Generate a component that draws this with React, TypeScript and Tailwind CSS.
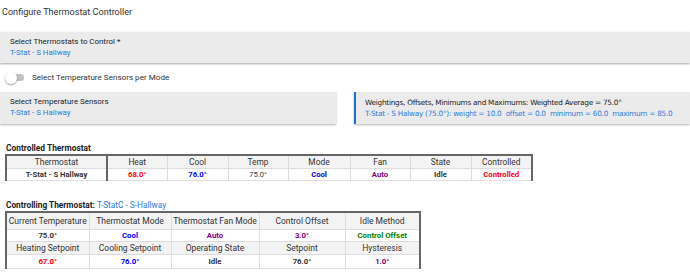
import React from "react";

const blue = "text-[#2f7bd8]";

function Table1() {
  const widths = [101, 60, 61, 60, 62, 60, 61, 61];
  const heads = ["Thermostat", "Heat", "Cool", "Temp", "Mode", "Fan", "State", "Controlled"];
  const cells: { t: string; c: string; w: string }[] = [
    { t: "T-Stat - S Hallway", c: "text-[#333]", w: "font-bold" },
    { t: "68.0°", c: "text-[#ff0000]", w: "font-bold" },
    { t: "76.0°", c: "text-[#0000ff]", w: "font-bold" },
    { t: "75.0°", c: "text-[#444]", w: "font-normal" },
    { t: "Cool", c: "text-[#0000ff]", w: "font-bold" },
    { t: "Auto", c: "text-[#800080]", w: "font-bold" },
    { t: "Idle", c: "text-[#333]", w: "font-bold" },
    { t: "Controlled", c: "text-[#ff0000]", w: "font-bold" },
  ];
  return (
    <table className="ml-[5px] border-collapse table-fixed border-t-2 border-x-2 border-[#666]">
      <colgroup>
        {widths.map((w, i) => (
          <col key={i} style={{ width: w }} />
        ))}
      </colgroup>
      <tbody>
        <tr className="h-[12px] bg-[#f3f3f3]">
          {heads.map((h, i) => (
            <td
              key={i}
              className={`p-0 text-center text-[8.4px] leading-[12px] text-[#333] border-b border-[#ddd] ${i === 0 ? "border-r-2 border-r-[#666]" : "border-r border-r-[#ddd]"}`}
            >
              {h}
            </td>
          ))}
        </tr>
        <tr className="h-[12px] bg-white">
          {cells.map((c, i) => (
            <td
              key={i}
              className={`p-0 text-center text-[7.7px] leading-[11px] ${c.c} ${c.w} border-b border-[#ddd] ${i === 0 ? "border-r-2 border-r-[#666]" : "border-r border-r-[#ddd]"}`}
            >
              {c.t}
            </td>
          ))}
        </tr>
      </tbody>
    </table>
  );
}

function Table2() {
  const widths = [83, 82, 88, 86, 75];
  const rows: { h: boolean; cells: { t: string; c?: string }[]; hh: string }[] = [
    {
      h: true,
      hh: "h-[17px]",
      cells: [
        { t: "Current Temperature" },
        { t: "Thermostat Mode" },
        { t: "Thermostat Fan Mode" },
        { t: "Control Offset" },
        { t: "Idle Method" },
      ],
    },
    {
      h: false,
      hh: "h-[12px]",
      cells: [
        { t: "75.0°", c: "text-[#333]" },
        { t: "Cool", c: "text-[#0000ff]" },
        { t: "Auto", c: "text-[#800080]" },
        { t: "3.0°", c: "text-[#800080]" },
        { t: "Control Offset", c: "text-[#008000]" },
      ],
    },
    {
      h: true,
      hh: "h-[13px]",
      cells: [
        { t: "Heating Setpoint" },
        { t: "Cooling Setpoint" },
        { t: "Operating State" },
        { t: "Setpoint" },
        { t: "Hysteresis" },
      ],
    },
    {
      h: false,
      hh: "h-[14px]",
      cells: [
        { t: "67.0°", c: "text-[#ff0000]" },
        { t: "76.0°", c: "text-[#0000ff]" },
        { t: "Idle", c: "text-[#333]" },
        { t: "76.0°", c: "text-[#333]" },
        { t: "1.0°", c: "text-[#800080]" },
      ],
    },
  ];
  return (
    <table className="ml-[5px] border-collapse table-fixed border-t-2 border-x-2 border-[#666]">
      <colgroup>
        {widths.map((w, i) => (
          <col key={i} style={{ width: w }} />
        ))}
      </colgroup>
      <tbody>
        {rows.map((r, ri) => (
          <tr key={ri} className={`${r.hh} ${r.h ? "bg-[#f3f3f3]" : "bg-white"}`}>
            {r.cells.map((c, ci) => (
              <td
                key={ci}
                className={`p-0 text-center whitespace-nowrap border-b border-r border-[#ddd] ${
                  r.h ? "text-[8.5px] leading-[12px] text-[#333]" : `text-[7.8px] leading-[11px] font-bold ${c.c}`
                }`}
              >
                {c.t}
              </td>
            ))}
          </tr>
        ))}
      </tbody>
    </table>
  );
}

export default function App() {
  return (
    <div className="w-[690px] h-[280px] overflow-hidden bg-white font-['Roboto',sans-serif] text-[#222]">
      <div className="pt-[5px] pl-[2px] text-[9.1px] leading-[14px] text-[#333]">Configure Thermostat Controller</div>
      <div className="mt-[13px] h-[31px] bg-[#ebebeb] shadow-[0_1px_2px_rgba(0,0,0,0.35)] pl-[10px] pt-[5px] text-[7.9px] leading-[10.5px]">
        <div>Select Thermostats to Control *</div>
        <div className={blue}>T-Stat - S Hallway</div>
      </div>
      <div className="h-[29px] flex items-center pl-[5px] gap-[8px]">
        <div className="relative w-[19px] h-[12px] flex items-center">
          <div className="absolute left-[4px] w-[15px] h-[7px] rounded-full bg-[#c2c2c2]" />
          <div className="absolute left-0 w-[12px] h-[12px] rounded-full bg-white shadow-[0_1px_2px_rgba(0,0,0,0.4)]" />
        </div>
        <div className="text-[8.1px] text-[#333]">Select Temperature Sensors per Mode</div>
      </div>
      <div className="flex gap-[18px] h-[32px]">
        <div className="w-[336px] bg-[#ebebeb] shadow-[0_1px_2px_rgba(0,0,0,0.3)] pl-[10px] pt-[5px] text-[7.9px] leading-[10.5px]">
          <div>Select Temperature Sensors</div>
          <div className={blue}>T-Stat - S Hallway</div>
        </div>
        <div className="flex-1 bg-[#ebebeb] border-l-2 border-[#1f6fd1] shadow-[0_1px_2px_rgba(0,0,0,0.3)] pl-[9px] pt-[5px] font-['DejaVu_Sans',sans-serif] text-[7.3px] leading-[11px] tracking-[-0.25px] whitespace-nowrap">
          <div>Weightings, Offsets, Minimums and Maximums: Weighted Average = 75.0°</div>
          <div className={blue}>
            T-Stat - S Halway (75.0°): weight = 10.0&nbsp; offset = 0.0&nbsp; minimum = 60.0&nbsp; maximum = 85.0
          </div>
        </div>
      </div>
      <div className="mt-[19px] pl-[6px] text-[8.4px] leading-[11px] font-bold text-[#222]">Controlled Thermostat</div>
      <Table1 />
      <div className="mt-[19px] pl-[6px] text-[8.3px] leading-[11px] text-[#222]">
        <span className="font-bold">Controlling Thermostat: </span>
        <span className={blue}>T-StatC - S-Hallway</span>
      </div>
      <Table2 />
    </div>
  );
}
